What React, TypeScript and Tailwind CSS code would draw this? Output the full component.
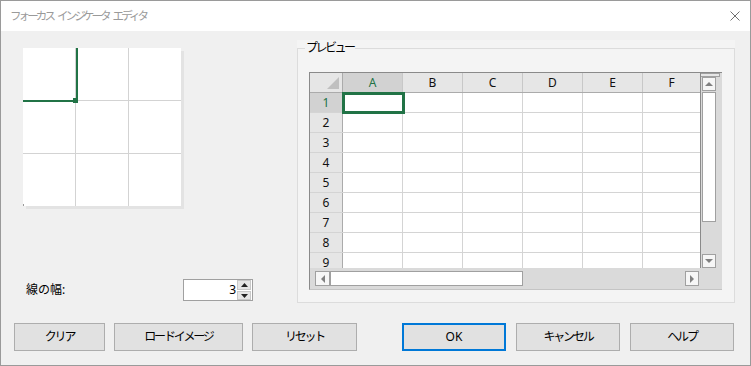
import React from "react";

const cols = ["A", "B", "C", "D", "E", "F"];
const rows = [1, 2, 3, 4, 5, 6, 7, 8, 9];

function Btn({ label, w, ml, primary }: { label: string; w: string; ml: string; primary?: boolean }) {
  return (
    <div
      className={`${w} ${ml} h-[28px] flex items-center justify-center bg-[#e1e1e1] ${
        primary ? "border-2 border-[#0078d7]" : "border border-[#adadad]"
      } text-[12px] text-black`}
    >
      <span className={primary ? "" : "tracking-[-2.2px]"}>{label}</span>
    </div>
  );
}

function Tri({ dir }: { dir: "up" | "down" | "left" | "right" }) {
  const pts: Record<string, string> = {
    up: "0,5 4,1 8,5",
    down: "0,1 8,1 4,5",
    left: "5,0 5,8 1,4",
    right: "1,0 1,8 5,4",
  };
  const horiz = dir === "left" || dir === "right";
  return (
    <svg width={horiz ? 6 : 8} height={horiz ? 8 : 6} viewBox={horiz ? "0 0 6 8" : "0 0 8 6"}>
      <polygon points={pts[dir]} fill="#808080" />
    </svg>
  );
}

export default function App() {
  return (
    <div className="w-[751px] h-[366px] border border-[#9a9a9a] bg-[#f0f0f0] flex flex-col overflow-hidden text-[12px] text-black font-['Noto_Sans','Noto_Sans_CJK_JP',sans-serif]">
      {/* title bar */}
      <div className="h-[30px] shrink-0 bg-white flex items-center justify-between pl-[9px] pr-[10px]">
        <div className="flex gap-[4px] text-[#9a9a9a] text-[11.5px] tracking-[-2.9px]">
          <span>フォーカス</span>
          <span>インジケータ</span>
          <span>エディタ</span>
        </div>
        <svg width="10" height="10" viewBox="0 0 10 10">
          <path d="M0.5 0.5 L9.5 9.5 M9.5 0.5 L0.5 9.5" stroke="#707070" strokeWidth="1" />
        </svg>
      </div>

      {/* body */}
      <div className="flex-1 flex flex-col">
        <div className="flex h-[272px]">
          {/* left column */}
          <div className="w-[296px] flex flex-col">
            <div className="mt-[17px] ml-[22px] w-[158px] h-[158px] shadow-[3px_3px_0_#e3e3e3]">
              <svg width="158" height="158" viewBox="0 0 158 158">
                <rect x="0" y="0" width="158" height="158" fill="#ffffff" />
                <line x1="52.5" y1="0" x2="52.5" y2="158" stroke="#d3d3d3" strokeWidth="1" />
                <line x1="105.5" y1="0" x2="105.5" y2="158" stroke="#d3d3d3" strokeWidth="1" />
                <line x1="0" y1="52.5" x2="158" y2="52.5" stroke="#d3d3d3" strokeWidth="1" />
                <line x1="0" y1="105.5" x2="158" y2="105.5" stroke="#d3d3d3" strokeWidth="1" />
                <rect x="53" y="0" width="2" height="50" fill="#217346" />
                <rect x="0" y="52" width="50" height="2" fill="#217346" />
                <rect x="50" y="50" width="5" height="5" fill="#217346" />
                <rect x="0" y="156" width="1" height="2" fill="#9a9a9a" />
              </svg>
            </div>
            <div className="mt-[73px] h-[22px] flex items-center">
              <span className="ml-[25px] w-[157px]">線の幅:</span>
              <div className="w-[70px] h-[22px] bg-white border border-[#a0a0a0] flex items-center">
                <span className="flex-1 text-right pr-[1px] text-[12px]">3</span>
                <div className="w-[14px] h-[20px] flex flex-col gap-[1px] mr-[1px]">
                  <div className="h-[10px] flex items-center justify-center bg-[#e6e6e6] border border-[#c8c8c8]">
                    <svg width="7" height="4" viewBox="0 0 7 4"><polygon points="0,4 3.5,0 7,4" fill="#222" /></svg>
                  </div>
                  <div className="h-[9px] flex items-center justify-center bg-[#e6e6e6] border border-[#c8c8c8]">
                    <svg width="7" height="4" viewBox="0 0 7 4"><polygon points="0,0 7,0 3.5,4" fill="#222" /></svg>
                  </div>
                </div>
              </div>
            </div>
          </div>

          {/* preview group */}
          <div className="mt-[9px] w-[438px] h-[263px] bg-[#f4f4f4] pt-[8px] relative">
            <div className="h-full border border-[#dcdcdc] pl-[11px] pt-[23px]">
              {/* grid block */}
              <div className="w-[413px] h-[218px] flex flex-col bg-[#dadada] border-l border-t border-b border-l-[#8a8a8a] border-t-[#8a8a8a] border-b-[#c4c4c4]">
                <div className="flex h-[195px]">
                  {/* sheet */}
                  <div className="w-[391px] h-[195px] bg-white border-r border-[#8a8a8a] overflow-hidden relative">
                    <div className="flex h-[20px] border-b border-[#ababab]">
                      <div className="w-[33px] h-full bg-[#e6e6e6] border-r border-[#ababab] flex items-end justify-end pr-[3px] pb-[3px]">
                        <svg width="12" height="12" viewBox="0 0 12 12"><polygon points="12,0 12,12 0,12" fill="#c0c0c0" /></svg>
                      </div>
                      {cols.map((c, i) => (
                        <div
                          key={c}
                          className={`${i === 5 ? "flex-1" : "w-[60px] border-r border-[#c8c8c8]"} h-full flex items-center justify-center ${
                            i === 0 ? "bg-[#d2d2d2] text-[#217346]" : "bg-[#e6e6e6] text-[#111]"
                          } text-[12px]`}
                        >
                          {c}
                        </div>
                      ))}
                    </div>
                    {rows.map((r) => (
                      <div key={r} className="flex h-[20px] border-b border-[#d4d4d4]">
                        <div
                          className={`w-[33px] h-full border-r border-[#ababab] flex items-center justify-center text-[12px] ${
                            r === 1 ? "bg-[#d2d2d2] text-[#217346]" : "bg-[#e6e6e6] text-[#111]"
                          }`}
                        >
                          {r}
                        </div>
                        {cols.map((c, i) => (
                          <div key={c} className={`${i === 5 ? "flex-1" : "w-[60px] border-r border-[#d4d4d4]"} h-full`} />
                        ))}
                      </div>
                    ))}
                    <div className="absolute left-[32px] top-[19px] w-[63px] h-[22px] border-[3px] border-[#217346]" />
                  </div>
                  {/* vertical scrollbar */}
                  <div className="w-[21px] h-[195px] flex flex-col pl-[1px]">
                    <div className="h-[4px] w-[20px] -ml-[2px] border border-[#a0a0a0] bg-[#e6e6e6]" />
                    <div className="h-[14px] w-[14px] bg-[#f6f6f6] border border-[#a0a0a0] flex items-center justify-center">
                      <Tri dir="up" />
                    </div>
                    <div className="mt-[1px] h-[130px] w-[14px] bg-white border border-[#a0a0a0]" />
                    <div className="flex-1" />
                    <div className="h-[14px] w-[14px] bg-[#f6f6f6] border border-[#a0a0a0] flex items-center justify-center">
                      <Tri dir="down" />
                    </div>
                  </div>
                </div>
                {/* horizontal scrollbar */}
                <div className="h-[22px] flex items-center pl-[5px]">
                  <div className="w-[15px] h-[15px] bg-[#f6f6f6] border border-[#a0a0a0] flex items-center justify-center">
                    <Tri dir="left" />
                  </div>
                  <div className="w-[193px] h-[15px] bg-white border border-[#a0a0a0]" />
                  <div className="flex-1" />
                  <div className="w-[14px] h-[15px] bg-[#f6f6f6] border border-[#a0a0a0] flex items-center justify-center mr-[23px]">
                    <Tri dir="right" />
                  </div>
                </div>
              </div>
            </div>
            <span className="absolute left-[8px] top-[1px] px-[1px] bg-[#f4f4f4] leading-[14px] text-[12px] tracking-[-2.5px]">プレビュー</span>
          </div>
        </div>

        {/* buttons */}
        <div className="mt-[20px] flex">
          <Btn label="クリア" w="w-[91px]" ml="ml-[13px]" />
          <Btn label="ロードイメージ" w="w-[129px]" ml="ml-[9px]" />
          <Btn label="リセット" w="w-[105px]" ml="ml-[9px]" />
          <Btn label="OK" w="w-[104px]" ml="ml-[45px]" primary />
          <Btn label="キャンセル" w="w-[104px]" ml="ml-[10px]" />
          <Btn label="ヘルプ" w="w-[104px]" ml="ml-[10px]" />
        </div>
      </div>
    </div>
  );
}
